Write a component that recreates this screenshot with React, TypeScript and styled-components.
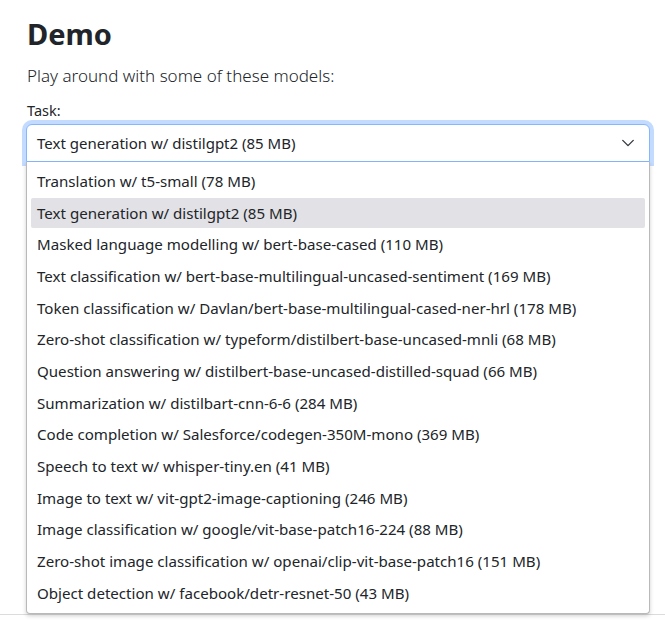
import React, { useState } from "react";
import styled, { createGlobalStyle } from "styled-components";

const Global = createGlobalStyle`
  html, body { margin: 0; padding: 0; background: #fff; }
  body {
    font-family: "Noto Sans", "Open Sans", sans-serif;
    color: #212529;
    overflow: hidden;
  }
`;

const Page = styled.div`
  width: 665px;
  height: 623px;
  position: relative;
  overflow: hidden;
`;

const Container = styled.main`
  padding: 14px 15px 0 26px;
  display: flex;
  flex-direction: column;
`;

const Title = styled.h1`
  margin: 0;
  font-size: 29px;
  line-height: 40px;
  font-weight: 700;
  color: #212529;
  padding-left: 1px;
`;

const Lead = styled.p`
  margin: 8px 0 0 0;
  font-size: 17px;
  line-height: 28px;
  font-weight: 300;
  color: #212529;
  padding-left: 1px;
`;

const Label = styled.label`
  margin-top: 10px;
  font-size: 14.5px;
  line-height: 20px;
  padding-left: 1px;
`;

const SelectWrap = styled.div`
  position: relative;
  margin-top: 4px;
`;

const SelectBox = styled.button`
  width: 100%;
  height: 38px;
  box-sizing: border-box;
  display: flex;
  align-items: center;
  justify-content: space-between;
  padding: 0 14px 0 10px;
  background: #fff;
  border: 1px solid #86b7fe;
  border-radius: 6px 6px 0 0;
  box-shadow: 0 0 0 4px #c2dbfe;
  font-family: inherit;
  font-size: 15px;
  color: #212529;
  text-align: left;
  cursor: pointer;
`;

const Chevron = styled.svg`
  width: 14px;
  height: 10px;
  flex: none;
`;

const List = styled.ul`
  position: absolute;
  left: 0;
  right: 0;
  top: 38px;
  margin: 0;
  padding: 4px;
  list-style: none;
  background: #fff;
  border: 1px solid #b9b9b9;
  border-top: none;
  border-radius: 0 0 4px 4px;
  box-shadow: 0 2px 4px rgba(0, 0, 0, 0.18);
  z-index: 10;
`;

const Option = styled.li<{ $active: boolean }>`
  height: 30px;
  margin-bottom: 1.67px;
  padding: 0 6px;
  display: flex;
  align-items: center;
  font-size: 15.1px;
  color: #212529;
  border-radius: 2px;
  background: ${(p) => (p.$active ? "#e1e1e6" : "transparent")};
  white-space: nowrap;
`;

const Below = styled.div`
  position: absolute;
  left: 0;
  right: 0;
  top: 614px;
  height: 1px;
  background: #dcdcdc;
`;

const options = [
  "Translation w/ t5-small (78 MB)",
  "Text generation w/ distilgpt2 (85 MB)",
  "Masked language modelling w/ bert-base-cased (110 MB)",
  "Text classification w/ bert-base-multilingual-uncased-sentiment (169 MB)",
  "Token classification w/ Davlan/bert-base-multilingual-cased-ner-hrl (178 MB)",
  "Zero-shot classification w/ typeform/distilbert-base-uncased-mnli (68 MB)",
  "Question answering w/ distilbert-base-uncased-distilled-squad (66 MB)",
  "Summarization w/ distilbart-cnn-6-6 (284 MB)",
  "Code completion w/ Salesforce/codegen-350M-mono (369 MB)",
  "Speech to text w/ whisper-tiny.en (41 MB)",
  "Image to text w/ vit-gpt2-image-captioning (246 MB)",
  "Image classification w/ google/vit-base-patch16-224 (88 MB)",
  "Zero-shot image classification w/ openai/clip-vit-base-patch16 (151 MB)",
  "Object detection w/ facebook/detr-resnet-50 (43 MB)",
];

export default function App() {
  const [selected] = useState(1);
  return (
    <Page>
      <Global />
      <Container>
        <Title>Demo</Title>
        <Lead>Play around with some of these models:</Lead>
        <Label>Task:</Label>
        <SelectWrap>
          <SelectBox>
            <span>{options[selected]}</span>
            <Chevron viewBox="0 0 16 10">
              <path d="M2 2l6 6 6-6" fill="none" stroke="#343a40" strokeWidth="1.6" strokeLinecap="round" strokeLinejoin="round" />
            </Chevron>
          </SelectBox>
          <List>
            {options.map((o, i) => (
              <Option key={o} $active={i === selected}>{o}</Option>
            ))}
          </List>
        </SelectWrap>
      </Container>
      <Below />
    </Page>
  );
}
